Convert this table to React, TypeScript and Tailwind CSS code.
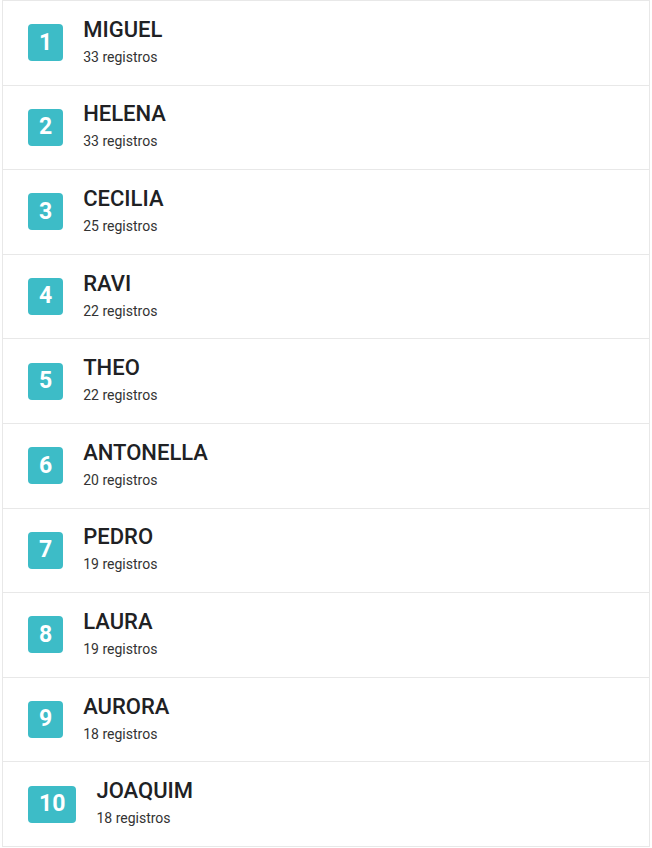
import React from 'react';

const ranking = [
  { name: 'MIGUEL', count: 33 },
  { name: 'HELENA', count: 33 },
  { name: 'CECILIA', count: 25 },
  { name: 'RAVI', count: 22 },
  { name: 'THEO', count: 22 },
  { name: 'ANTONELLA', count: 20 },
  { name: 'PEDRO', count: 19 },
  { name: 'LAURA', count: 19 },
  { name: 'AURORA', count: 18 },
  { name: 'JOAQUIM', count: 18 },
];

const RankRow = ({ pos, name, count }: { pos: number; name: string; count: number }) => (
  <li className="flex-1 flex items-center border-b border-[#e8e8e8] last:border-b-0 pl-[25px]">
    <span className="min-w-[34px] h-[37px] px-[11px] rounded-[4px] bg-[#3dbcc7] text-white font-bold text-[23px] flex items-center justify-center">
      {pos}
    </span>
    <div className="ml-[20px] mb-[3px] flex flex-col">
      <span className="text-[22px] font-medium leading-[26px] text-[#202124]">{name}</span>
      <span className="text-[14px] leading-[18px] text-[#333] mt-[5px]">{count} registros</span>
    </div>
  </li>
);

export default function App() {
  return (
    <div className="bg-white w-[652px] h-[848px] pl-[2px] pr-[2px]" style={{ fontFamily: 'Roboto, sans-serif' }}>
      <ul className="h-[847px] flex flex-col border border-[#e8e8e8]">
        {ranking.map((r, i) => (
          <RankRow key={r.name} pos={i + 1} name={r.name} count={r.count} />
        ))}
      </ul>
    </div>
  );
}
